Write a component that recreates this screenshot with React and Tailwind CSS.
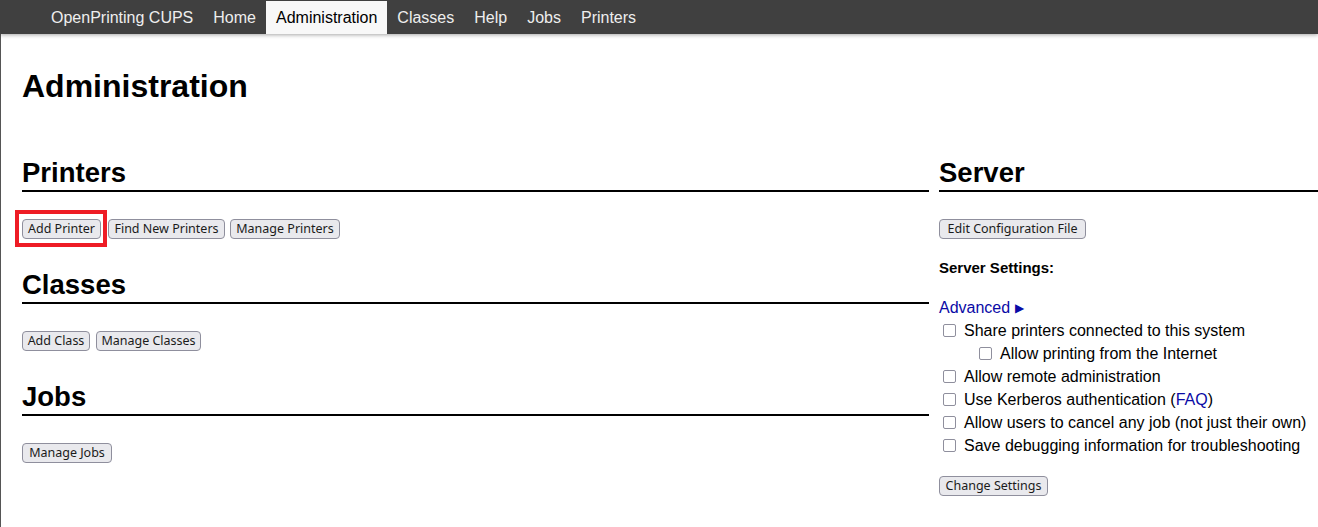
import React from "react";

const Btn = ({ w, children }) => (
  <span
    className="flex items-center justify-center h-[20px] rounded-[4px] border border-[#8f8f9d] bg-[#e9e9ed] text-[12.5px] text-[#1b1b1b] leading-none shrink-0"
    style={{ width: w, fontFamily: '"Noto Sans", "DejaVu Sans", sans-serif' }}
  >
    {children}
  </span>
);

const H2 = ({ children }) => (
  <h2 className="text-[27.5px] leading-[32px] font-bold text-black pb-[1px] border-b-2 border-black">
    {children}
  </h2>
);

const Box = ({ indent }) => (
  <span
    className={
      "block w-[13px] h-[13px] rounded-[2px] border border-[#8f8f9d] bg-white shrink-0 " +
      (indent ? "ml-[40px]" : "ml-[4px]")
    }
  />
);

const Row = ({ indent, children }) => (
  <div className="flex items-center h-[23px] text-[16px] text-black">
    <Box indent={indent} />
    <span className="ml-[8px] whitespace-nowrap">{children}</span>
  </div>
);

export default function App() {
  return (
    <div
      className="w-[1318px] min-h-[527px] bg-white overflow-hidden"
      style={{ fontFamily: '"Liberation Sans", Arial, sans-serif' }}
    >
      <nav className="relative z-10 h-[34px] bg-[#404040] pt-[1px] pl-[41px] flex shadow-[0_1px_4px_rgba(0,0,0,0.35)]">
        {["OpenPrinting CUPS", "Home", "Administration", "Classes", "Help", "Jobs", "Printers"].map((t) => (
          <span
            key={t}
            className={
              "flex items-center pt-[1px] px-[10px] text-[16px] " +
              (t === "Administration" ? "bg-[#f8f8f8] text-black" : "text-[#eeeeee]")
            }
          >
            {t}
          </span>
        ))}
      </nav>
      <main className="border-l border-[#555] min-h-[493px] pl-[21px] pt-[34px]">
        <h1 className="text-[32px] leading-[36px] font-bold text-black">Administration</h1>
        <div className="grid grid-cols-[907px_379px] gap-x-[10px] mt-[53px]">
          <div>
            <section>
              <H2>Printers</H2>
              <div className="flex items-start h-[20px] mt-[27px]">
                <div className="relative flex mr-[7px]">
                  <Btn w="79px">Add Printer</Btn>
                  <div className="absolute left-[-7px] right-[-6px] top-[-9px] bottom-[-8px] border-4 border-[#ee1c25]" />
                </div>
                <div className="flex mr-[5px]">
                  <Btn w="117px">Find New Printers</Btn>
                </div>
                <Btn w="110px">Manage Printers</Btn>
              </div>
            </section>
            <section className="mt-[30px]">
              <H2>Classes</H2>
              <div className="flex items-start h-[20px] gap-[6px] mt-[27px]">
                <Btn w="68px">Add Class</Btn>
                <Btn w="105px">Manage Classes</Btn>
              </div>
            </section>
            <section className="mt-[30px]">
              <H2>Jobs</H2>
              <div className="flex items-start h-[20px] mt-[27px]">
                <Btn w="90px">Manage Jobs</Btn>
              </div>
            </section>
          </div>
          <div>
            <H2>Server</H2>
            <div className="flex items-start h-[20px] mt-[27px]">
              <Btn w="147px">Edit Configuration File</Btn>
            </div>
            <div className="mt-[20px] text-[15px] leading-[18px] font-bold text-black">Server Settings:</div>
            <div className="mt-[19px] flex items-center h-[23px] text-[16px] text-[#0a0aa6]">
              <span>Advanced</span>
              <span className="ml-[5px] text-[12px] leading-none">▶</span>
            </div>
            <Row>Share printers connected to this system</Row>
            <Row indent>Allow printing from the Internet</Row>
            <Row>Allow remote administration</Row>
            <Row>
              Use Kerberos authentication (<span className="text-[#0a0aa6]">FAQ</span>)
            </Row>
            <Row>Allow users to cancel any job (not just their own)</Row>
            <Row>Save debugging information for troubleshooting</Row>
            <div className="flex items-start h-[20px] mt-[19px]">
              <Btn w="109px">Change Settings</Btn>
            </div>
          </div>
        </div>
      </main>
    </div>
  );
}
